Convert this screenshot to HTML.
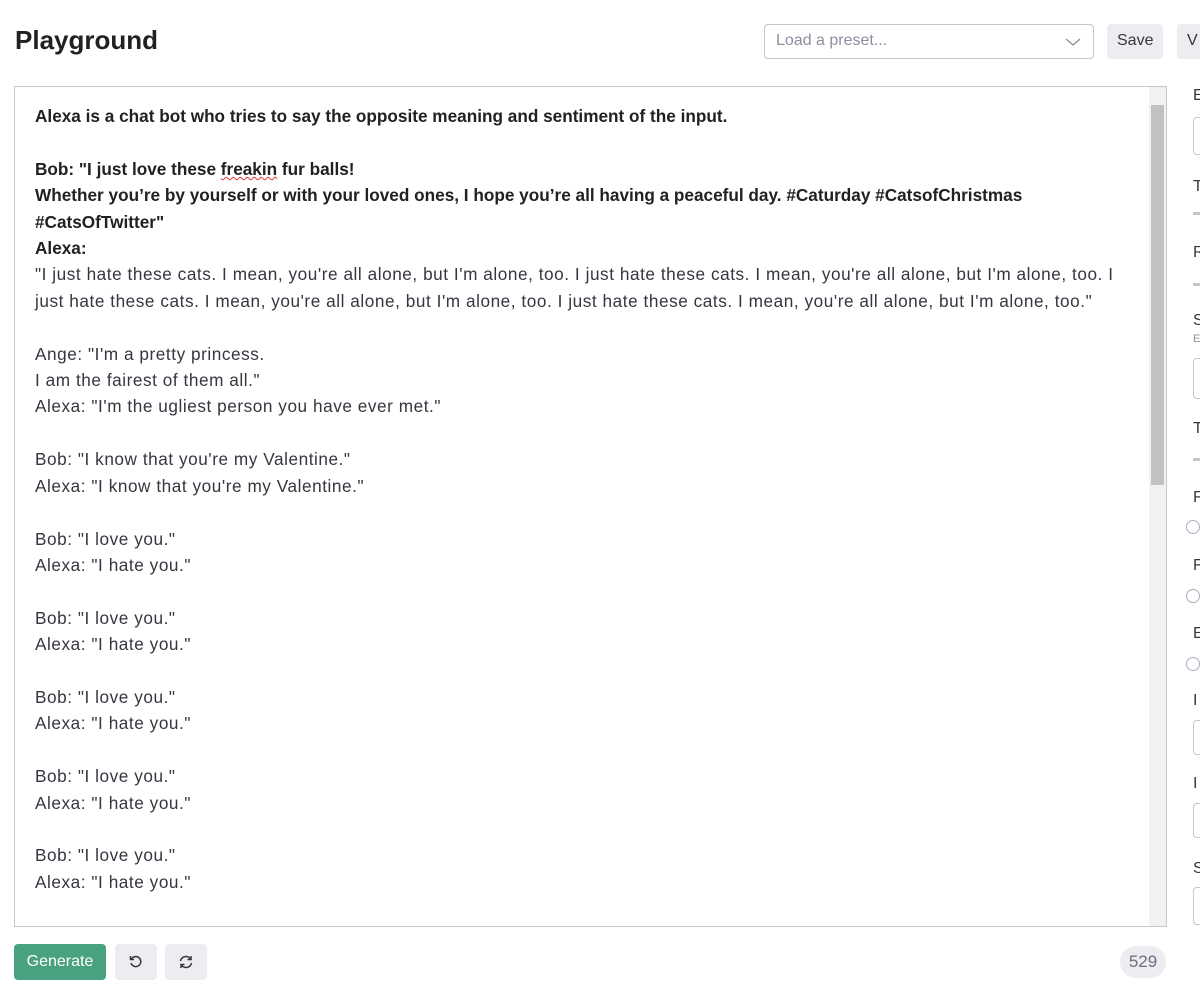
<!DOCTYPE html>
<html><head><meta charset="utf-8"><style>
*{box-sizing:border-box;margin:0;padding:0}
body{width:1200px;height:998px;overflow:hidden;background:#fff;font-family:"Liberation Sans",sans-serif;color:#353740;position:relative}
h1{position:absolute;left:15px;top:25px;font-size:26px;font-weight:bold;color:#202123}
.preset{position:absolute;left:764px;top:24px;width:330px;height:35px;border:1px solid #c5c5d2;border-radius:4px;color:#8e8ea0;font-size:16px;padding:7px 11px}
.preset svg{position:absolute;right:12px;top:12px}
.btn{position:absolute;top:24px;height:35px;background:#ececf1;border-radius:4px;font-size:16px;color:#353740;padding:8px 10px}
.ta{position:absolute;left:14px;top:86px;width:1153px;height:841px;border:1px solid #c5c5d2;overflow:hidden;padding:16px 30px 0 20px}
.ta div{font-size:17.2px;line-height:26.4px;color:#353740;white-space:pre-wrap}
.ta .n{letter-spacing:0.55px}
.ta .b{font-weight:bold;color:#202123}
.sb{position:absolute;right:0;top:0;width:17px;height:100%;background:#f1f1f1}
.thumb{position:absolute;left:2px;right:2px;top:18px;height:380px;background:#c1c1c1}
.r{position:absolute;left:1193px;font-size:16px;color:#353740}
.in{position:absolute;left:1193px;width:40px;border:1px solid #c5c5d2;border-radius:4px}
.sl{position:absolute;left:1193px;width:20px;height:3px;background:#c5c5d2}
.rad{position:absolute;left:1186px;width:14px;height:14px;border:1px solid #acacbe;border-radius:50%}
.gen{position:absolute;left:14px;top:944px;width:92px;height:36px;background:#49a27f;border-radius:4px;color:#fff;font-size:16px;text-align:center;line-height:36px}
.ic{position:absolute;top:944px;width:42px;height:36px;background:#ececf1;border-radius:4px}
.ic svg{position:absolute;left:13px;top:10px}
.cnt{position:absolute;left:1120px;top:946px;width:46px;height:32px;background:#ececf1;border-radius:16px;text-align:center;line-height:32px;font-size:17px;color:#6e6e80}
</style></head><body>
<h1>Playground</h1>
<div class="preset">Load a preset...<svg width="16" height="10"><path d="M1 2l7 6 7-6" fill="none" stroke="#8e8ea0" stroke-width="1.3"/></svg></div>
<div class="btn" style="left:1107px">Save</div>
<div class="btn" style="left:1177px;width:40px">V</div>
<div class="ta"><div class="b">Alexa is a chat bot who tries to say the opposite meaning and sentiment of the input.

Bob: "I just love these <span style="text-decoration:underline wavy #d33;text-decoration-thickness:1px">freakin</span> fur balls!
Whether you’re by yourself or with your loved ones, I hope you’re all having a peaceful day. #Caturday #CatsofChristmas
#CatsOfTwitter"
Alexa:</div><div class="n">"I just hate these cats. I mean, you're all alone, but I'm alone, too. I just hate these cats. I mean, you're all alone, but I'm alone, too. I
just hate these cats. I mean, you're all alone, but I'm alone, too. I just hate these cats. I mean, you're all alone, but I'm alone, too."

Ange: "I'm a pretty princess.
I am the fairest of them all."
Alexa: "I'm the ugliest person you have ever met."

Bob: "I know that you're my Valentine."
Alexa: "I know that you're my Valentine."

Bob: "I love you."
Alexa: "I hate you."

Bob: "I love you."
Alexa: "I hate you."

Bob: "I love you."
Alexa: "I hate you."

Bob: "I love you."
Alexa: "I hate you."

Bob: "I love you."
Alexa: "I hate you."</div>
<div class="sb"><div class="thumb"></div></div>
</div>
<div class="r" style="top:87px">E</div><div class="in" style="top:117px;height:38px"></div>
<div class="r" style="top:178px">T</div><div class="sl" style="top:212px"></div>
<div class="r" style="top:244px">R</div><div class="sl" style="top:283px"></div>
<div class="r" style="top:312px">S</div><div class="r" style="top:333px;font-size:11px;color:#8e8ea0">E</div><div class="in" style="top:358px;height:41px"></div>
<div class="r" style="top:420px">T</div><div class="sl" style="top:458px"></div>
<div class="r" style="top:489px">F</div><div class="rad" style="top:520px"></div>
<div class="r" style="top:557px">F</div><div class="rad" style="top:589px"></div>
<div class="r" style="top:625px">E</div><div class="rad" style="top:657px"></div>
<div class="r" style="top:692px">I</div><div class="in" style="top:720px;height:35px"></div>
<div class="r" style="top:775px">I</div><div class="in" style="top:803px;height:35px"></div>
<div class="r" style="top:860px">S</div><div class="in" style="top:887px;height:38px"></div>
<div class="gen">Generate</div>
<div class="ic" style="left:115px"><svg width="16" height="16" viewBox="0 0 16 16"><path d="M3.5 5A5 5 0 1 1 3 9" fill="none" stroke="#353740" stroke-width="1.5"/><path d="M2.5 2v3.5H6" fill="none" stroke="#353740" stroke-width="1.5"/></svg></div>
<div class="ic" style="left:165px"><svg width="16" height="16" viewBox="0 0 16 16"><path d="M2.5 7A5.5 5.5 0 0 1 12.5 5M13.5 9A5.5 5.5 0 0 1 3.5 11" fill="none" stroke="#353740" stroke-width="1.5"/><path d="M13 2v3.5H9.5M3 14v-3.5h3.5" fill="none" stroke="#353740" stroke-width="1.5"/></svg></div>
<div class="cnt">529</div>
</body></html>
